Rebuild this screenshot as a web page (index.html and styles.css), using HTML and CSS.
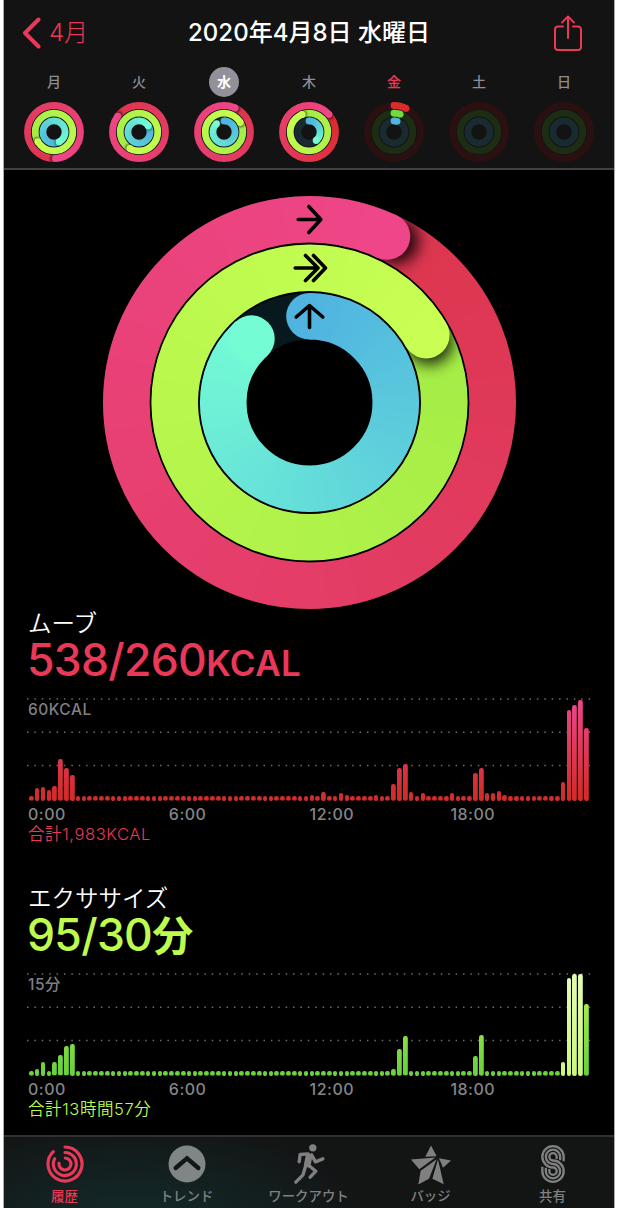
FILE: index.html
```html
<!DOCTYPE html>
<html lang="ja">
<head>
    <meta charset="UTF-8">
    <meta name="viewport" content="width=device-width, initial-scale=1.0">
    <title>アクティビティ</title>
    <link rel="stylesheet" href="styles.css">
</head>
<body>
    <div class="phone">
        <header class="header">
            <div class="nav">
                <a class="back">
                    <svg width="19" height="32" viewBox="0 0 19 32"><path d="M16.5 2.5 3 16l13.500 13.500"/></svg>
                    <span>4月</span>
                </a>
                <h1 class="title">2020年4月8日 水曜日</h1>
                <svg class="share" width="30" height="38" viewBox="0 0 30 38">
                    <path d="M10 12.500H5a3 3 0 0 0-3 3V33a3 3 0 0 0 3 3h20a3 3 0 0 0 3-3V15.500a3 3 0 0 0-3-3h-5M15 24V3M9 8.500l6-6 6 6"/>
                </svg>
            </div>
            <div class="week">
                <div class="day"><span>月</span><svg class="rings small" data-rings="537,599,513"></svg></div>
                <div class="day"><span>火</span><svg class="rings small" data-rings="667,569,418"></svg></div>
                <div class="day selected"><span>水</span><svg class="rings small" data-rings="745,780,318"></svg></div>
                <div class="day"><span>木</span><svg class="rings small" data-rings="409,699,140"></svg></div>
                <div class="day today"><span>金</span><svg class="rings small" data-rings="27,19,16"></svg></div>
                <div class="day"><span>土</span><svg class="rings small" data-rings="0,0,0"></svg></div>
                <div class="day"><span>日</span><svg class="rings small" data-rings="0,0,0"></svg></div>
            </div>
        </header>

        <main class="content">
            <div class="summary">
                <svg class="rings large" data-rings="745,780,317.7"></svg>
            </div>

            <section class="metric move">
                <h2>ムーブ</h2>
                <p class="value">538/260<small>KCAL</small></p>
                <div class="chart">
                    <svg class="grid" width="564" height="69"><path d="M0 1h564M0 34.300h564M0 67.500h564"/></svg>
                    <span class="scale">60KCAL</span>
                    <div class="bars" id="moveBars"></div>
                </div>
                <div class="hours"><span>0:00</span><span>6:00</span><span>12:00</span><span>18:00</span></div>
                <p class="total">合計1,983KCAL</p>
            </section>

            <section class="metric exercise">
                <h2>エクササイズ</h2>
                <p class="value">95/30<b>分</b></p>
                <div class="chart">
                    <svg class="grid" width="564" height="69"><path d="M0 1h564M0 34.300h564M0 67.500h564"/></svg>
                    <span class="scale">15分</span>
                    <div class="bars" id="exerciseBars"></div>
                </div>
                <div class="hours"><span>0:00</span><span>6:00</span><span>12:00</span><span>18:00</span></div>
                <p class="total">合計13時間57分</p>
            </section>
        </main>

        <nav class="tabs">
            <a class="tab active">
                <svg viewBox="-60 -60 120 120" fill="none" stroke="currentColor" stroke-width="9.500" stroke-linecap="round">
                    <path d="M0-51A51 51 0 1 1-35-37"/>
                    <path d="M0-34.500A34.500 34.500 0 1 1-31-16"/>
                    <path d="M1-18A18 18 0 1 1-18-2"/>
                </svg>
                <span>履歴</span>
            </a>
            <a class="tab">
                <svg viewBox="-60 -60 120 120">
                    <circle r="55.500" fill="#808686"/>
                    <path d="M-34 12 0-17 34 12" fill="none" stroke="#101717" stroke-width="13" stroke-linecap="round"/>
                </svg>
                <span>トレンド</span>
            </a>
            <a class="tab">
                <svg viewBox="85.500 16.500 120 120" fill="none" stroke="currentColor" stroke-width="10" stroke-linecap="round" stroke-linejoin="round">
                    <circle cx="157" cy="28" r="11" fill="currentColor" stroke="none"/>
                    <path d="M116 70l3-22 24-2"/>
                    <path d="M153 49l12 21 22-9"/>
                    <path d="M141 50l10 2-6 30-10-2z" fill="currentColor"/>
                    <path d="M136 80l-9 30-21 21M144 80l22 18-17 18"/>
                </svg>
                <span>ワークアウト</span>
            </a>
            <a class="tab">
                <svg viewBox="300 55.500 120 120" fill="currentColor">
                    <path d="M360 60l17 32-34 2z"/>
                    <path d="M300 102l73-6-48 35z"/>
                    <path d="M420 105l-36-7 12 29z"/>
                    <path d="M377 101l-48 35-7 41 32-17z"/>
                    <path d="M381 102l17 74-34-16z"/>
                </svg>
                <span>バッジ</span>
            </a>
            <a class="tab">
                <svg viewBox="39 17 120 120" fill="none" stroke="currentColor" stroke-width="7">
                    <path d="M131 69V55.500a32 32 0 1 0-32 32a11 11 0 1 1-11 11V92"/>
                    <path d="M120.500 66V55.500a21.500 21.500 0 1 0-21.500 21.500a21.500 21.500 0 1 1-21.500 21.500V88"/>
                    <path d="M110 62V55.500a11 11 0 1 0-11 11a32 32 0 1 1-32 32V85"/>
                </svg>
                <span>共有</span>
            </a>
        </nav>
    </div>
    <script src="activity.js"></script>
</body>
</html>
```

FILE: styles.css
```css
:root {
    --move: #ea3858;
    --exercise: #bdfb4e;
    --gray: #8e8e93;
    --bar: #131313;
}

* {
    margin: 0;
    padding: 0;
    box-sizing: border-box;
}

body {
    background: #fff;
    font-family: Inter, 'Noto Sans CJK JP', sans-serif;
}

.phone {
    width: 612px;
    height: 1208px;
    margin-left: 3px;
    background: #000;
    border: solid #aaa;
    border-width: 0 1px;
    display: flex;
    flex-direction: column;
    overflow: hidden;
}

/* header */
.header {
    flex: none;
    height: 170px;
    background: var(--bar);
    border-bottom: 2px solid #414143;
}

.nav {
    height: 66px;
    padding: 0 31px 0 18px;
    display: grid;
    grid-template-columns: 90px 1fr 77px;
    align-items: center;
}

.back {
    display: flex;
    align-items: center;
    gap: 8px;
    color: var(--move);
    font-size: 24px;
    font-weight: 300;
    line-height: 32px;
}

.back path {
    fill: none;
    stroke: var(--move);
    stroke-width: 4;
    stroke-linecap: round;
    stroke-linejoin: round;
}

.title {
    color: #fff;
    font-size: 24px;
    font-weight: 500;
    line-height: 32px;
    text-align: center;
    white-space: nowrap;
}

.share {
    justify-self: end;
}

.share path {
    fill: none;
    stroke: var(--move);
    stroke-width: 2;
    stroke-linecap: round;
    stroke-linejoin: round;
}

.week {
    display: flex;
    padding: 1px 7.5px 0;
}

.day {
    width: 85px;
    display: flex;
    flex-direction: column;
    align-items: center;
    gap: 5px;
    color: var(--gray);
    font-size: 14px;
    font-weight: 500;
}

.day span {
    width: 30px;
    height: 30px;
    line-height: 30px;
    text-align: center;
    border-radius: 50%;
}

.day.selected span {
    background: #929199;
    color: #fff;
    font-weight: 700;
}

.day.today span {
    color: var(--move);
}

.rings {
    display: block;
    overflow: visible;
}

.rings.small {
    width: 60px;
    height: 60px;
}

.rings.large {
    width: 413px;
    height: 413px;
}

.rings .symbol {
    fill: none;
    stroke: #000;
    stroke-width: 3.6;
    stroke-linecap: round;
    stroke-linejoin: round;
}

/* content */
.content {
    flex: 1;
    min-height: 0;
    padding-left: 23px;
}

.summary {
    padding: 26px 0 0 76px;
}

.metric {
    height: 274.5px;
}

.metric h2 {
    padding-left: 1px;
    color: #fff;
    font-size: 23.5px;
    font-weight: 350;
    line-height: 29px;
}

.value {
    height: 44px;
    margin-bottom: 16px;
    font-size: 44.5px;
    line-height: 44px;
    font-weight: 500;
    letter-spacing: -0.7px;
    white-space: nowrap;
}

.value small {
    font-size: 35px;
    font-weight: 600;
    letter-spacing: 0.4px;
}

.value b {
    font-size: 41px;
    font-weight: 700;
    line-height: 40px;
}

.move .value,
.move .total {
    color: var(--move);
}

.exercise .value,
.exercise .total {
    color: var(--exercise);
}

.chart {
    height: 103px;
    display: grid;
}

.grid,
.scale,
.bars {
    grid-area: 1 / 1;
}

.grid path {
    stroke: #6c6c70;
    stroke-width: 1.5;
    stroke-dasharray: 1.5 5.89;
}

.scale {
    padding: 3px 0 0 1px;
    color: #7f7f83;
    font-size: 15.5px;
    font-weight: 500;
    letter-spacing: 0.5px;
    line-height: 18px;
}

.bars {
    width: 563px;
    padding-left: 2px;
    align-self: end;
    display: flex;
    align-items: flex-end;
    justify-content: space-between;
}

.bars i {
    width: 4.6px;
    border-radius: 2.3px;
    background: linear-gradient(#ec4690, #d42c2b 92%) bottom / 100% 102px;
}

.exercise .bars i {
    background-image: linear-gradient(#c0f850, #6bd33d 92%);
}

.exercise .bars i.workout {
    background-image: linear-gradient(#e4fcb4, #cdf67c);
}

.hours {
    display: flex;
    height: 23px;
    padding-left: 1px;
    color: #858589;
    font-size: 16px;
    font-weight: 500;
    letter-spacing: 0.5px;
    line-height: 26px;
}

.hours span {
    width: 140.8px;
}

.total {
    padding-left: 1px;
    font-size: 16.5px;
    font-weight: 350;
    letter-spacing: 0.6px;
    line-height: 20px;
}

/* bottom tabs */
.tabs {
    flex: none;
    height: 73px;
    border-top: 2px solid #303030;
    background: radial-gradient(ellipse 230px 95px at 130px 80px, #142a2a, #131515);
    display: flex;
}

.tab {
    flex: 1;
    padding: 7px 1px 0 0;
    display: flex;
    flex-direction: column;
    align-items: center;
    color: #808080;
    font-size: 13.4px;
    font-weight: 500;
    line-height: 20px;
}

.tab svg {
    width: 40px;
    height: 40px;
    margin-bottom: 2px;
}

.tab.active {
    color: var(--move);
}
```

FILE: activity.js
```js
const NS = 'http://www.w3.org/2000/svg';

const RINGS = [
    { from: [218, 44, 44], mid: [220, 54, 78], to: [238, 70, 136], track: '#2b1012' },
    { from: [112, 220, 62], mid: [163, 236, 70], to: [200, 255, 82], track: '#1c2d14' },
    { from: [80, 180, 224], mid: [80, 180, 224], to: [116, 252, 212], track: '#192a31' }
];

const SIZES = {
    large: { half: 206.5, width: 46.6, radii: [183.2, 134.8, 86.3] },
    small: { half: 30, width: 6.8, radii: [26.5, 18.8, 11.1] }
};

const SYMBOLS = [
    'M-11.300-183H11M-.7-196 11.300-183-.7-170',
    'M-14.300-134.500H8M-4-147 8.500-134.500-4-122M4-147 16-134.500 4-122',
    'M0-75V-97M-13.300-85.500 0-97 13.300-85.500'
];

let maskCount = 0;

function add(parent, tag, attrs) {
    const el = document.createElementNS(NS, tag);
    for (const name in attrs) el.setAttribute(name, attrs[name]);
    parent.appendChild(el);
    return el;
}

function point(r, deg) {
    const a = (deg - 90) * Math.PI / 180;
    return [(r * Math.cos(a)).toFixed(3), (r * Math.sin(a)).toFixed(3)];
}

function mix(a, b, t) {
    return 'rgb(' + a.map((v, i) => Math.round(v + (b[i] - v) * t)).join(',') + ')';
}

// arc made of short strokes, so that the colour can follow the angle
function drawArc(parent, r, width, begin, end, color) {
    for (let a = begin; a < end; a += 3) {
        const p = point(r, a);
        const q = point(r, Math.min(a + 6, end));
        add(parent, 'path', {
            d: `M${p} A${r} ${r} 0 0 1 ${q}`,
            fill: 'none', stroke: color(a), 'stroke-width': width + 1
        });
    }
}

function drawRing(svg, ring, r, width, angle, large) {
    add(svg, 'circle', { r, fill: 'none', stroke: large ? '#07191d' : ring.track, 'stroke-width': width });
    if (!angle) return;

    const begin = Math.max(0, angle - 360);
    const first = angle > 450 ? ring.mid : ring.from;
    const last = angle < 60 ? ring.from : ring.to;
    const color = a => mix(first, last, Math.min(1, (a - begin) / (angle - begin)));
    const [ex, ey] = point(r, angle);

    if (angle <= 360) {
        const [sx, sy] = point(r, 0);
        add(svg, 'circle', { cx: sx, cy: sy, r: width / 2, fill: color(0) });
    }

    // the mask gives the strokes one smooth edge
    const id = 'ring' + maskCount++;
    const mask = add(svg, 'mask', { id, maskUnits: 'userSpaceOnUse', x: -210, y: -210, width: 420, height: 420 });
    add(mask, 'circle', { r, fill: 'none', stroke: '#fff', 'stroke-width': width });
    const g = add(svg, 'g', { mask: `url(#${id})` });
    drawArc(g, r, width, begin, angle, color);

    if (angle > 360) {
        const [x, y] = point(r, angle + (large ? 3 : 4));
        const shadow = add(g, 'circle', { cx: x, cy: y, r: width / 2, fill: '#000', opacity: large ? 0.85 : 0.55 });
        shadow.style.filter = `blur(${width * 0.16}px)`;
        drawArc(g, r, width, angle - 60, angle, color);
    }
    add(svg, 'circle', { cx: ex, cy: ey, r: width / 2, fill: color(angle) });
}

document.querySelectorAll('.rings').forEach(svg => {
    const large = svg.classList.contains('large');
    const size = large ? SIZES.large : SIZES.small;
    svg.setAttribute('viewBox', `${-size.half} ${-size.half} ${size.half * 2} ${size.half * 2}`);
    svg.dataset.rings.split(',').forEach((angle, i) => {
        drawRing(svg, RINGS[i], size.radii[i], size.width, Number(angle), large);
        if (large) add(svg, 'path', { class: 'symbol', d: SYMBOLS[i] });
    });
});

// one bar for every 15 minutes, bars without a value stay a dot
const move = {
    1: 12.7, 2: 14.5, 3: 11.5, 4: 15.5, 5: 41.7, 6: 33, 7: 26.5, 48: 6, 49: 4.7, 50: 9, 53: 8.5, 54: 5.7,
    57: 4.7, 59: 5.7, 62: 16.7, 63: 33, 64: 36.7, 65: 9.3, 67: 8, 71: 5.3, 72: 8.3, 73: 4.7, 75: 5.3,
    76: 28, 77: 33, 78: 7.7, 79: 7.7, 80: 10.3, 81: 6.3, 82: 5, 83: 5.3, 84: 5.3, 86: 5.2, 89: 5.3,
    90: 5, 91: 18.7, 92: 91.3, 93: 96.3, 94: 101.5, 95: 73
};
const exercise = {
    1: 6.7, 2: 13.3, 4: 13.3, 5: 20.3, 6: 29.3, 7: 32, 62: 6.7, 63: 26.7, 64: 39.3, 76: 20, 77: 40.7,
    91: 13.3, 92: 98, 93: 102, 94: 102, 95: 71.7
};

function drawBars(id, data, workout) {
    const box = document.getElementById(id);
    for (let i = 0; i < 96; i++) {
        const bar = document.createElement('i');
        bar.style.height = (data[i] || 4.6) + 'px';
        if (workout.includes(i)) bar.className = 'workout';
        box.appendChild(bar);
    }
}

drawBars('moveBars', move, []);
drawBars('exerciseBars', exercise, [91, 92, 93, 94]);
```
